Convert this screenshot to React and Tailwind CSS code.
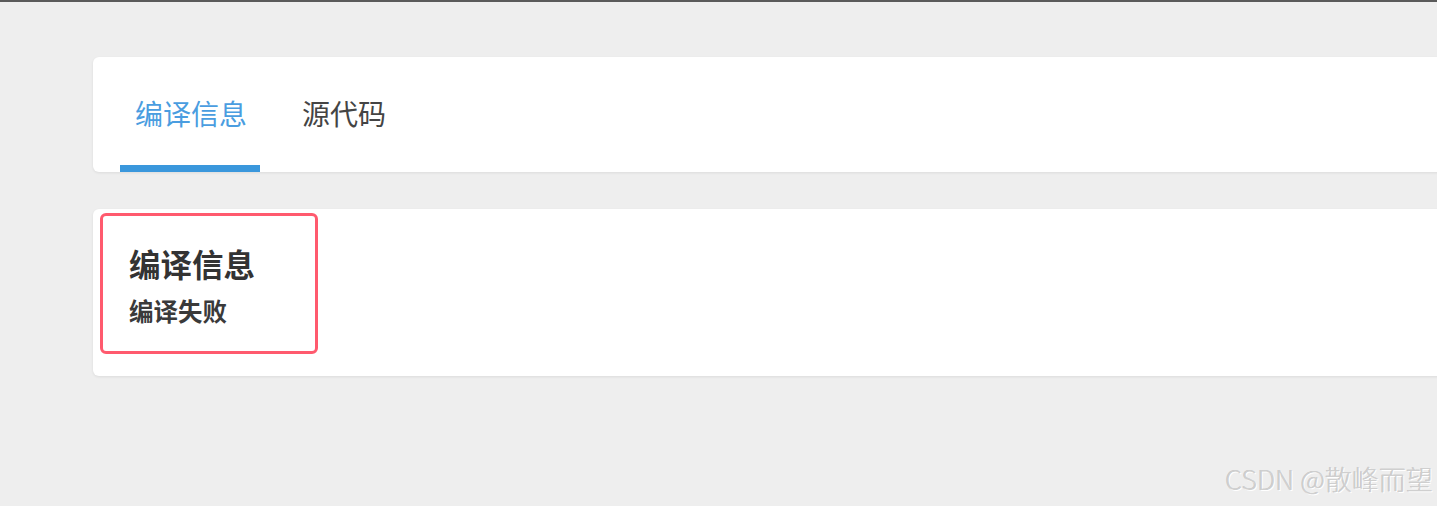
import React from 'react';

const font = { fontFamily: '"Noto Sans CJK SC", "Noto Sans", sans-serif' };

const App = () => {
  return (
    <div className="relative h-[506px] w-[1437px] overflow-hidden bg-[#eeeeee]" style={font}>
      <div className="h-[2px] bg-[#5a5a5a]" />

      {/* Tabs */}
      <div className="ml-[93px] mt-[55px] flex h-[115px] w-[1400px] gap-[27px] rounded-md bg-white pl-[27px] shadow-[0_1px_3px_rgba(0,0,0,0.08)]">
        <div className="flex w-[140px] flex-col">
          <div className="whitespace-nowrap px-[15px] pt-[38px] text-[28px] leading-[36px] text-[#4a9de0]">编译信息</div>
          <div className="mt-auto h-[7px] shrink-0 bg-[#3a97dc]" />
        </div>
        <div className="flex flex-col">
          <div className="whitespace-nowrap px-[15px] pt-[38px] text-[28px] leading-[36px] text-[#444444]">源代码</div>
        </div>
      </div>

      {/* Content */}
      <div className="ml-[93px] mt-[37px] h-[167px] w-[1400px] rounded-md bg-white pl-[7px] pt-[4px] shadow-[0_1px_3px_rgba(0,0,0,0.08)]">
        <div className="h-[141px] w-[218px] rounded-md border-[3px] border-[#ff5a6e] pl-[26px] pt-[28px]">
          <div className="whitespace-nowrap text-[31.5px] font-bold leading-[38px] text-[#333333]">编译信息</div>
          <div className="mt-[14px] whitespace-nowrap text-[24.5px] font-bold leading-[30px] text-[#3a3a3a]">编译失败</div>
        </div>
      </div>

      <div className="absolute right-[4px] top-[461px] whitespace-nowrap text-[27px] font-light leading-[36px] text-[#cfcfcf] [text-shadow:1px_1px_0_#ffffff,-0.5px_-0.5px_0_#c4c4c4]">
        CSDN @散峰而望
      </div>
    </div>
  );
};

export default App;
